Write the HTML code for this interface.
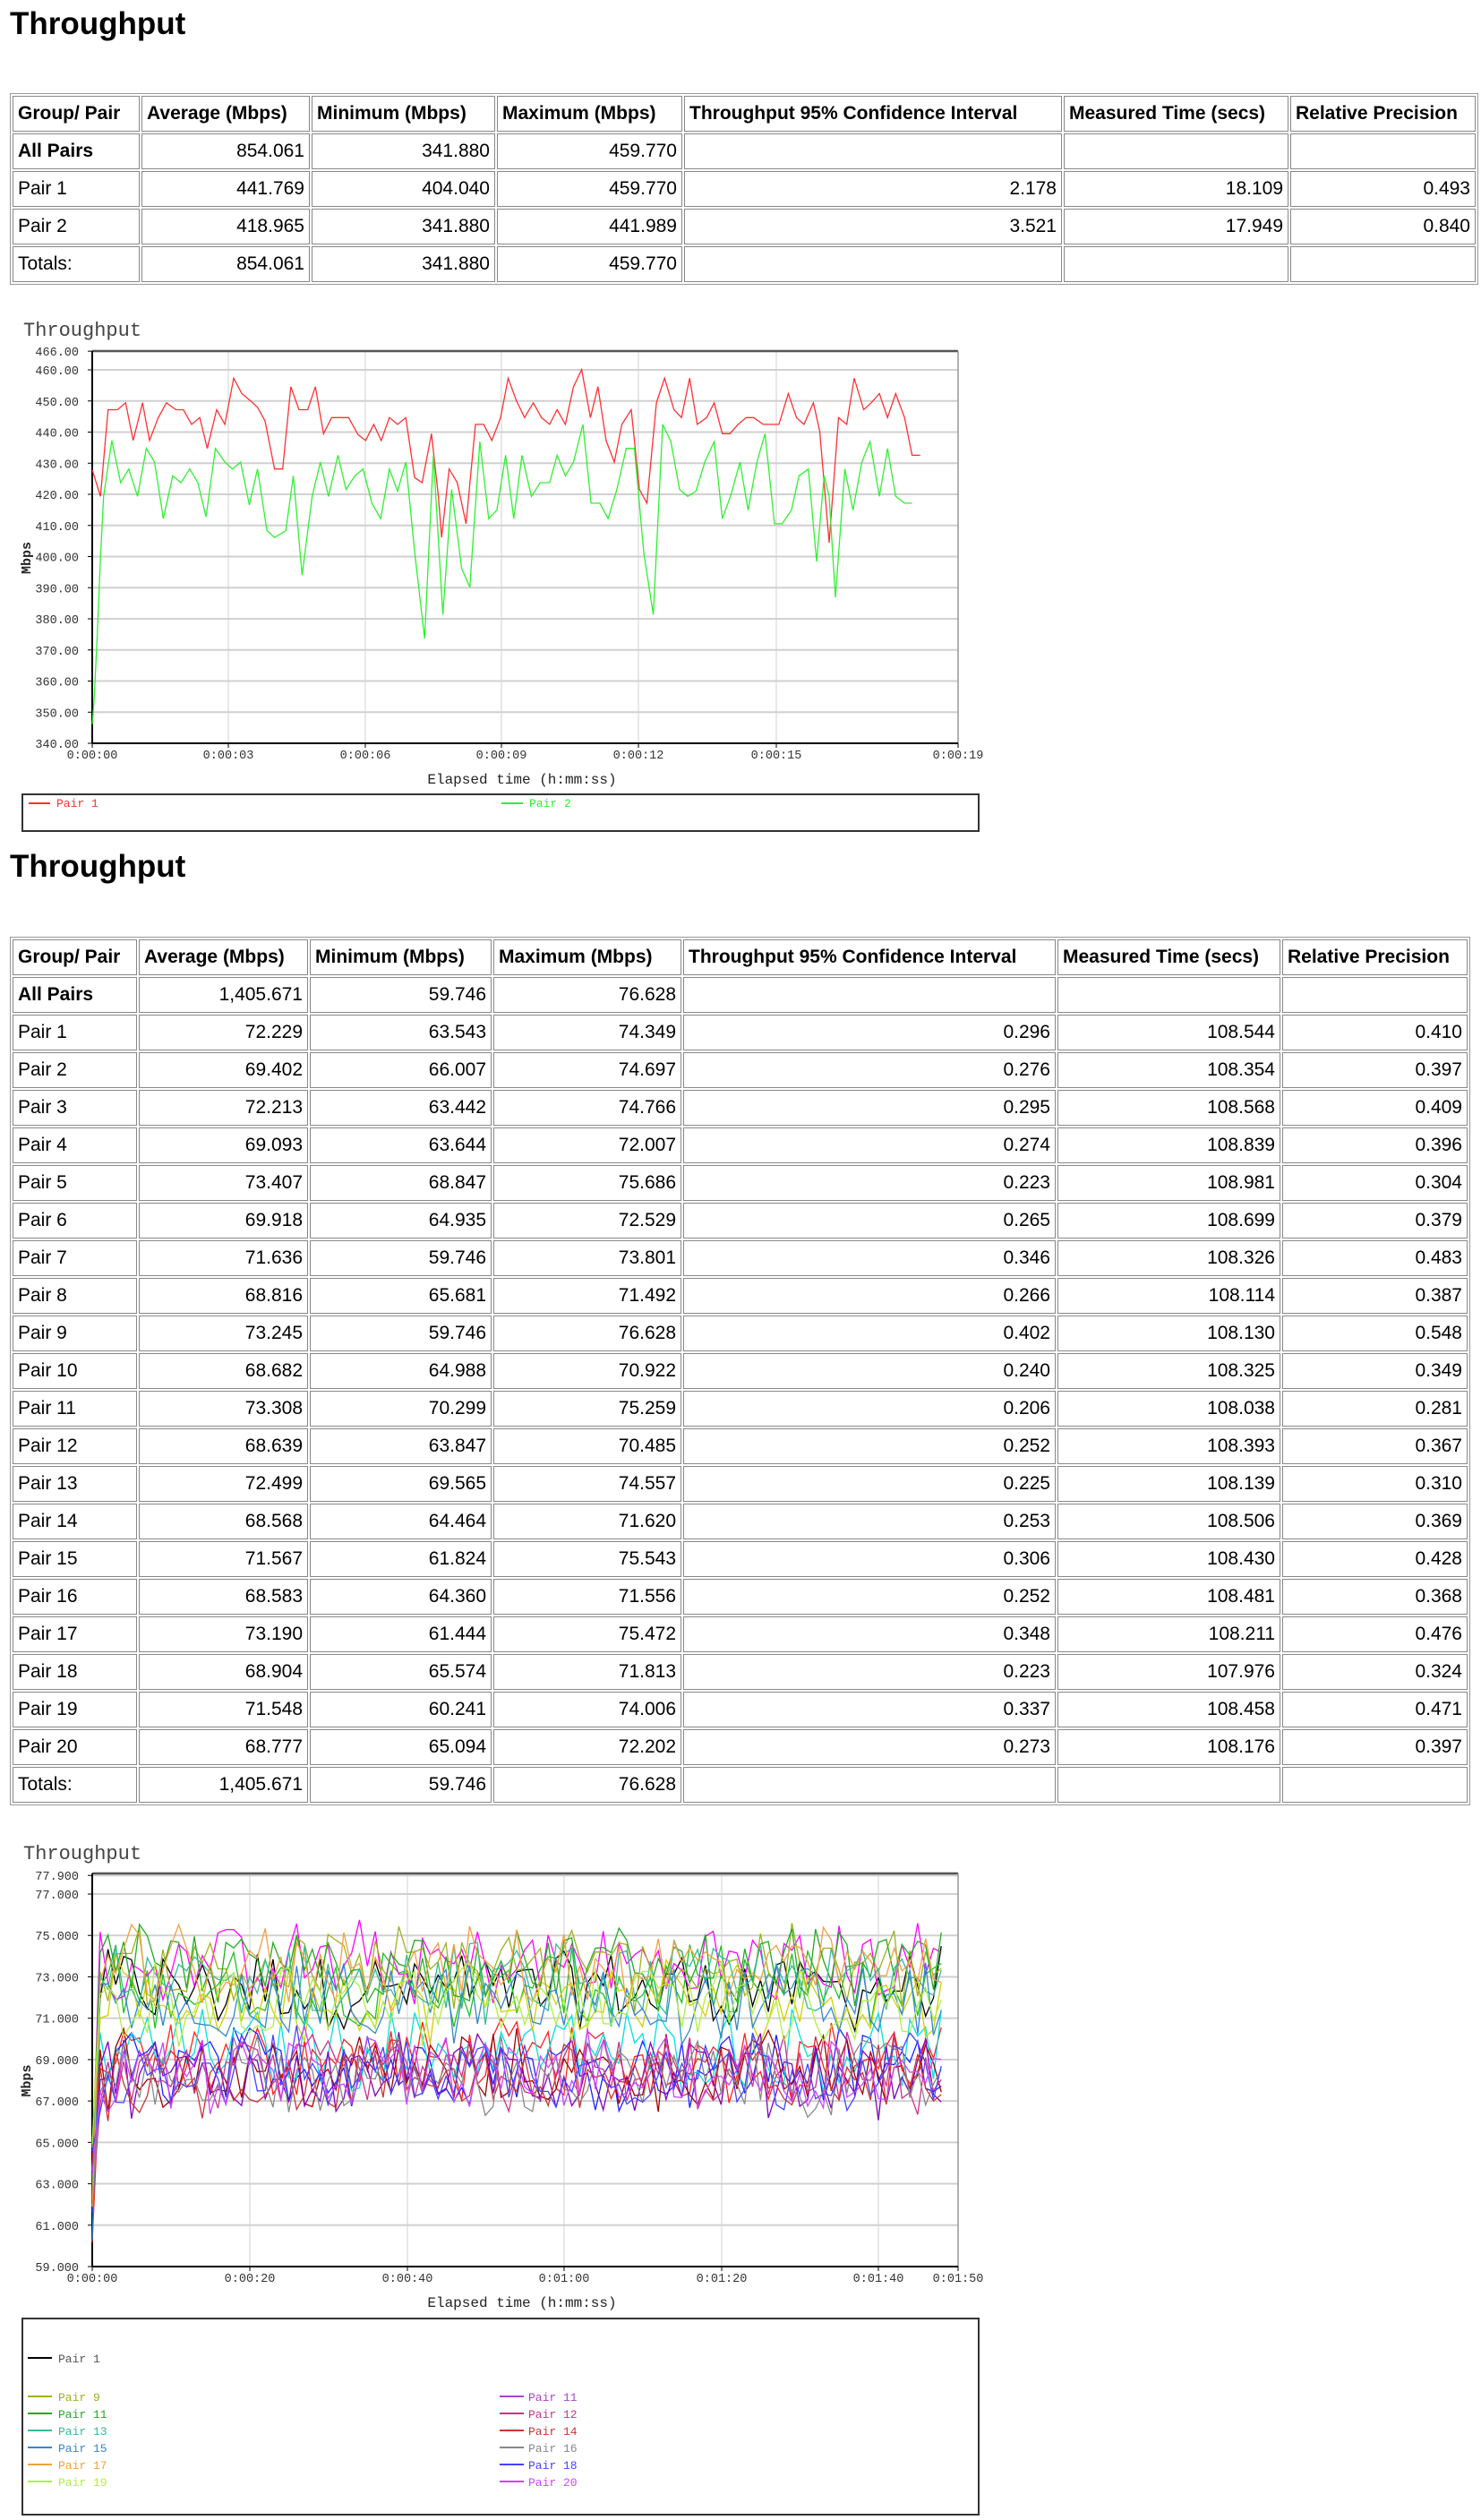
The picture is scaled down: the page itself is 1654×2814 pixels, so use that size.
<!DOCTYPE html>
<html><head><meta charset="utf-8">
<style>
html,body{margin:0;padding:0;background:#fff;}
body{width:1654px;height:2814px;position:relative;overflow:hidden;font-family:"Liberation Sans",sans-serif;color:#000;}
h1{position:absolute;left:11px;margin:0;font-size:35px;font-weight:bold;line-height:40px;}
table{position:absolute;left:11px;border:1px solid #999;border-collapse:separate;border-spacing:2px;table-layout:fixed;font-size:21px;}
td,th{border:1px solid #888;height:40px;padding:0 5px;box-sizing:border-box;white-space:nowrap;overflow:hidden;}
th{font-weight:bold;text-align:left;}
td{text-align:right;}
td.l{text-align:left;}
td.b{font-weight:bold;text-align:left;}
svg{position:absolute;left:0;top:0;}
</style></head><body>
<h1 style="top:7px">Throughput</h1>
<table style="top:104px;width:1637px">
<colgroup><col style="width:142px"><col style="width:188px"><col style="width:205px"><col style="width:207px"><col style="width:422px"><col style="width:251px"><col style="width:207px"></colgroup>
<tr><th>Group/ Pair</th><th>Average (Mbps)</th><th>Minimum (Mbps)</th><th>Maximum (Mbps)</th><th>Throughput 95% Confidence Interval</th><th>Measured Time (secs)</th><th>Relative Precision</th></tr>
<tr><td class="b">All Pairs</td><td>854.061</td><td>341.880</td><td>459.770</td><td></td><td></td><td></td></tr>
<tr><td class="l">Pair 1</td><td>441.769</td><td>404.040</td><td>459.770</td><td>2.178</td><td>18.109</td><td>0.493</td></tr>
<tr><td class="l">Pair 2</td><td>418.965</td><td>341.880</td><td>441.989</td><td>3.521</td><td>17.949</td><td>0.840</td></tr>
<tr><td class="l">Totals:</td><td>854.061</td><td>341.880</td><td>459.770</td><td></td><td></td><td></td></tr>
</table>

<h1 style="top:948px">Throughput</h1>
<table style="top:1046px;width:1629px">
<colgroup><col style="width:139px"><col style="width:189px"><col style="width:203px"><col style="width:210px"><col style="width:416px"><col style="width:249px"><col style="width:207px"></colgroup>
<tr><th>Group/ Pair</th><th>Average (Mbps)</th><th>Minimum (Mbps)</th><th>Maximum (Mbps)</th><th>Throughput 95% Confidence Interval</th><th>Measured Time (secs)</th><th>Relative Precision</th></tr>
<tr><td class="b">All Pairs</td><td>1,405.671</td><td>59.746</td><td>76.628</td><td></td><td></td><td></td></tr>
<tr><td class="l">Pair 1</td><td>72.229</td><td>63.543</td><td>74.349</td><td>0.296</td><td>108.544</td><td>0.410</td></tr>
<tr><td class="l">Pair 2</td><td>69.402</td><td>66.007</td><td>74.697</td><td>0.276</td><td>108.354</td><td>0.397</td></tr>
<tr><td class="l">Pair 3</td><td>72.213</td><td>63.442</td><td>74.766</td><td>0.295</td><td>108.568</td><td>0.409</td></tr>
<tr><td class="l">Pair 4</td><td>69.093</td><td>63.644</td><td>72.007</td><td>0.274</td><td>108.839</td><td>0.396</td></tr>
<tr><td class="l">Pair 5</td><td>73.407</td><td>68.847</td><td>75.686</td><td>0.223</td><td>108.981</td><td>0.304</td></tr>
<tr><td class="l">Pair 6</td><td>69.918</td><td>64.935</td><td>72.529</td><td>0.265</td><td>108.699</td><td>0.379</td></tr>
<tr><td class="l">Pair 7</td><td>71.636</td><td>59.746</td><td>73.801</td><td>0.346</td><td>108.326</td><td>0.483</td></tr>
<tr><td class="l">Pair 8</td><td>68.816</td><td>65.681</td><td>71.492</td><td>0.266</td><td>108.114</td><td>0.387</td></tr>
<tr><td class="l">Pair 9</td><td>73.245</td><td>59.746</td><td>76.628</td><td>0.402</td><td>108.130</td><td>0.548</td></tr>
<tr><td class="l">Pair 10</td><td>68.682</td><td>64.988</td><td>70.922</td><td>0.240</td><td>108.325</td><td>0.349</td></tr>
<tr><td class="l">Pair 11</td><td>73.308</td><td>70.299</td><td>75.259</td><td>0.206</td><td>108.038</td><td>0.281</td></tr>
<tr><td class="l">Pair 12</td><td>68.639</td><td>63.847</td><td>70.485</td><td>0.252</td><td>108.393</td><td>0.367</td></tr>
<tr><td class="l">Pair 13</td><td>72.499</td><td>69.565</td><td>74.557</td><td>0.225</td><td>108.139</td><td>0.310</td></tr>
<tr><td class="l">Pair 14</td><td>68.568</td><td>64.464</td><td>71.620</td><td>0.253</td><td>108.506</td><td>0.369</td></tr>
<tr><td class="l">Pair 15</td><td>71.567</td><td>61.824</td><td>75.543</td><td>0.306</td><td>108.430</td><td>0.428</td></tr>
<tr><td class="l">Pair 16</td><td>68.583</td><td>64.360</td><td>71.556</td><td>0.252</td><td>108.481</td><td>0.368</td></tr>
<tr><td class="l">Pair 17</td><td>73.190</td><td>61.444</td><td>75.472</td><td>0.348</td><td>108.211</td><td>0.476</td></tr>
<tr><td class="l">Pair 18</td><td>68.904</td><td>65.574</td><td>71.813</td><td>0.223</td><td>107.976</td><td>0.324</td></tr>
<tr><td class="l">Pair 19</td><td>71.548</td><td>60.241</td><td>74.006</td><td>0.337</td><td>108.458</td><td>0.471</td></tr>
<tr><td class="l">Pair 20</td><td>68.777</td><td>65.094</td><td>72.202</td><td>0.273</td><td>108.176</td><td>0.397</td></tr>
<tr><td class="l">Totals:</td><td>1,405.671</td><td>59.746</td><td>76.628</td><td></td><td></td><td></td></tr>
</table>

<svg id="s" width="1654" height="2814" xmlns="http://www.w3.org/2000/svg" font-family="Liberation Mono, monospace"></svg>

<script>
var s=document.getElementById('s'),h='';
function L(x1,y1,x2,y2,c,w){h+='<line x1="'+x1+'" y1="'+y1+'" x2="'+x2+'" y2="'+y2+'" stroke="'+c+'" stroke-width="'+(w||1)+'"/>';}
function T(x,y,t,o){o=o||{};h+='<text x="'+x+'" y="'+y+'" font-size="'+(o.fs||13.5)+'" fill="'+(o.c||'#333')+'" text-anchor="'+(o.a||'start')+'"'+(o.tr?' transform="'+o.tr+'"':'')+(o.fw?' font-weight="bold"':'')+'>'+t+'</text>';}
function P(pts,c){h+='<polyline fill="none" stroke="'+c+'" stroke-width="1.3" points="'+pts.map(function(p){return p[0].toFixed(1)+','+p[1].toFixed(1)}).join(' ')+'"/>';}
function chart(o){
 var L0=103,R=1070,top=o.top,bot=o.bot;
 T(26,o.titleY,'Throughput',{fs:22,c:'#444'});
 o.ylab.forEach(function(v){var y=o.ym(v);L(L0,y,R,y,'#d0d0d0',2);L(L0-5,y,L0,y,'#000',1);T(88,y+5,o.yfmt(v),{a:'end'});});
 o.xlab.forEach(function(a){L(a[0],top,a[0],bot,'#d0d0d0',1);L(a[0],bot,a[0],bot+5,'#000');T(a[0],bot+17,a[1],{a:'middle'});});
 L(L0,top,R,top,'#555',2.5);L(R,top,R,bot,'#999',1.5);L(L0,top,L0,bot,'#000',2);L(L0,bot,R,bot,'#000',2);
 T(583,bot+45,'Elapsed time (h:mm:ss)',{fs:16,a:'middle',c:'#222'});
 T(0,0,'Mbps',{fs:15,fw:1,c:'#222',a:'middle',tr:'translate(34,'+((top+bot)/2+12)+') rotate(-90)'});
 h+='<rect x="25" y="'+o.lt+'" width="1068" height="'+(o.lb-o.lt)+'" fill="none" stroke="#333" stroke-width="2"/>';
}
var ym1=function(v){return 830-(v-340)*3.475;};
chart({top:392,bot:830,titleY:375,ym:ym1,ylab:[466,460,450,440,430,420,410,400,390,380,370,360,350,340],yfmt:function(v){return v.toFixed(2)},
 xlab:[[103,'0:00:00'],[255,'0:00:03'],[408,'0:00:06'],[560,'0:00:09'],[713,'0:00:12'],[867,'0:00:15'],[1070,'0:00:19']],lt:887,lb:928});
function mp(a){var r=[];for(var i=0;i<a.length;i+=2)r.push([a[i]*0.7015,340+a[i+1]*0.38265]);return r;}
var red=[147,483,160,560,172,307,187,307,200,287,212,397,227,287,238,397,252,330,265,287,280,307,292,307,305,350,318,330,330,420,345,307,358,350,372,215,385,260,398,280,410,300,422,340,437,480,450,480,463,240,476,307,490,307,502,240,515,377,528,330,555,330,570,380,582,397,595,350,607,397,620,330,633,350,646,330,660,505,672,520,687,377,698,560,703,680,715,480,728,520,742,640,757,350,770,350,783,397,797,330,809,215,822,280,835,330,849,287,862,330,875,350,887,307,900,350,913,240,926,190,940,330,952,240,965,397,978,460,990,350,1005,307,1018,540,1030,580,1045,287,1058,215,1073,307,1085,330,1098,215,1110,350,1125,330,1137,287,1150,377,1162,377,1175,350,1188,330,1200,330,1215,350,1240,350,1255,260,1268,330,1280,350,1295,287,1305,370,1320,695,1335,330,1348,350,1360,215,1375,307,1387,287,1400,260,1413,330,1426,260,1440,330,1452,440,1465,440];
var grn=[147,1225,150,1150,155,960,160,740,165,560,178,397,192,520,205,480,219,560,233,420,246,460,260,625,275,500,288,520,302,480,315,520,328,620,343,420,358,460,370,480,383,460,397,585,410,480,425,660,437,680,455,660,467,500,481,790,497,560,510,460,523,560,538,440,551,540,565,500,578,480,592,580,606,625,620,480,633,545,646,460,660,720,676,975,690,440,705,905,719,540,735,770,748,825,764,400,778,625,791,600,805,440,818,625,831,440,846,560,860,520,875,520,887,440,900,500,913,460,928,350,941,580,955,580,968,625,982,540,997,420,1010,420,1025,725,1040,905,1055,350,1068,400,1082,540,1095,560,1108,545,1122,460,1137,400,1150,625,1163,560,1178,460,1191,600,1205,460,1218,377,1233,640,1245,640,1260,600,1272,500,1287,480,1300,750,1312,500,1320,560,1330,855,1345,480,1358,600,1372,460,1385,400,1400,560,1413,420,1426,560,1440,580,1452,580];
P(mp(red),'#ff3030');P(mp(grn),'#30f030');
L(32,897,56,897,'#ff3030',2);T(63,901,'Pair 1',{fs:13,c:'#ff3030'});
L(560,897,584,897,'#30f030',2);T(591,901,'Pair 2',{fs:13,c:'#30f030'});
var ym2=function(v){return 2531-(v-59)*23.11;};
chart({top:2092,bot:2531,titleY:2076,ym:ym2,ylab:[77.9,77,75,73,71,69,67,65,63,61,59],yfmt:function(v){return v.toFixed(3)},
 xlab:[[103,'0:00:00'],[279,'0:00:20'],[455,'0:00:40'],[630,'0:01:00'],[806,'0:01:20'],[981,'0:01:40'],[1070,'0:01:50']],lt:2589,lb:2808});
var cols=['#000000','#ff2020','#20c020','#2020ff','#ff00ff','#00e0e0','#d0d000','#a00000','#a0b020','#8000c0','#22aa22','#cc3388','#33bb99','#cc3333','#3388cc','#888888','#f0a040','#4444ff','#b0f040','#cc44ff'];
var avg=[72.229,69.402,72.213,69.093,73.407,69.918,71.636,68.816,73.245,68.682,73.308,68.639,72.499,68.568,71.567,68.583,73.19,68.904,71.548,68.777];
var seed=12345;function rnd(){seed=(seed*1103515245+12345)%2147483648;return seed/2147483648;}
for(var p=0;p<20;p++){var pts=[];var base=avg[p]>71?avg[p]+0.2:avg[p]-0.4;
 for(var t=0;t<=108;t++){var val;
  if(t==0)val=60+rnd()*5;else{val=base+(rnd()-0.5)*3.4+(rnd()-0.5)*1.2;}
  pts.push([103+t*8.78,ym2(val)]);}
 P(pts,cols[p]);}
L(31,2633,58,2633,'#000',2);T(65,2638,'Pair 1',{fs:13,c:'#555'});
var lg=[[9,'#a0b020',558,11,'#aa44cc'],[11,'#22aa22',558,12,'#cc3388'],[13,'#33bb99',558,14,'#cc3333'],[15,'#3388cc',558,16,'#888888'],[17,'#f0a040',558,18,'#4444ff'],[19,'#b0f040',558,20,'#cc44ff']];
lg.forEach(function(r,i){var y=2676+i*19;L(31,y,58,y,r[1],2);T(65,y+5,'Pair '+r[0],{fs:13,c:r[1]});L(558,y,585,y,r[4],2);T(590,y+5,'Pair '+r[3],{fs:13,c:r[4]});});
s.innerHTML=h;
</script>
</body></html>
